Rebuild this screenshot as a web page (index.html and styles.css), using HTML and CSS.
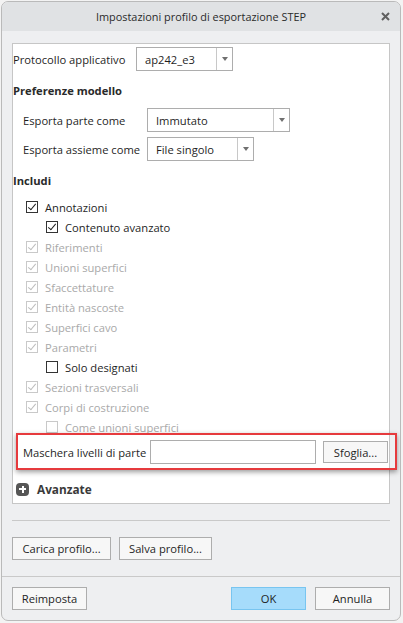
FILE: index.html
```html
<!DOCTYPE html>
<html lang="it">
<head>
    <meta charset="UTF-8">
    <meta name="viewport" content="width=device-width, initial-scale=1.0">
    <title>Impostazioni profilo di esportazione STEP</title>
    <link rel="stylesheet" href="styles.css">
</head>
<body>
    <div class="window">
        <div class="titlebar">
            <span class="title">Impostazioni profilo di esportazione STEP</span>
            <svg class="close" width="9" height="9" viewBox="0 0 9 9">
                <path d="M1 1 L8 8 M8 1 L1 8" stroke="#606060" stroke-width="2"/>
            </svg>
        </div>

        <div class="content">
            <div class="panel">
                <div class="row proto">
                    <span class="label">Protocollo applicativo</span>
                    <div class="select sel-proto">
                        <span class="value">ap242_e3</span>
                        <span class="drop"><i class="arrow"></i></span>
                    </div>
                </div>

                <div class="heading">Preferenze modello</div>
                <div class="row sub first">
                    <span class="label">Esporta parte come</span>
                    <div class="select sel-parte">
                        <span class="value">Immutato</span>
                        <span class="drop"><i class="arrow"></i></span>
                    </div>
                </div>
                <div class="row sub second">
                    <span class="label">Esporta assieme come</span>
                    <div class="select sel-assieme">
                        <span class="value">File singolo</span>
                        <span class="drop"><i class="arrow"></i></span>
                    </div>
                </div>

                <div class="heading includi">Includi</div>
                <div class="checks">
                    <div class="check"><span class="box on"></span>Annotazioni</div>
                    <div class="check indent"><span class="box on"></span>Contenuto avanzato</div>
                    <div class="check disabled"><span class="box on"></span>Riferimenti</div>
                    <div class="check disabled"><span class="box on"></span>Unioni superfici</div>
                    <div class="check disabled"><span class="box on"></span>Sfaccettature</div>
                    <div class="check disabled"><span class="box on"></span>Entità nascoste</div>
                    <div class="check disabled"><span class="box on"></span>Superfici cavo</div>
                    <div class="check disabled"><span class="box on"></span>Parametri</div>
                    <div class="check indent"><span class="box"></span>Solo designati</div>
                    <div class="check disabled"><span class="box on"></span>Sezioni trasversali</div>
                    <div class="check disabled"><span class="box on"></span>Corpi di costruzione</div>
                    <div class="check indent disabled"><span class="box"></span>Come unioni superfici</div>
                </div>

                <div class="row mask">
                    <span class="label">Maschera livelli di parte</span>
                    <input type="text" class="mask-input">
                    <button class="btn browse">Sfoglia...</button>
                    <div class="highlight"></div>
                </div>

                <div class="advanced">
                    <span class="plus"></span>
                    <span>Avanzate</span>
                </div>
            </div>

            <div class="divider"></div>

            <div class="profile-buttons">
                <button class="btn load">Carica profilo...</button>
                <button class="btn save">Salva profilo...</button>
            </div>
        </div>

        <div class="footer">
            <button class="btn wide">Reimposta</button>
            <div class="spacer"></div>
            <button class="btn wide ok">OK</button>
            <button class="btn wide">Annulla</button>
        </div>
    </div>
</body>
</html>
```

FILE: styles.css
```css
* {
    margin: 0;
    padding: 0;
    box-sizing: border-box;
}

body {
    background-color: #f3f3f3;
    font-family: 'Open Sans', 'Noto Sans', sans-serif;
    font-size: 11.2px;
    color: #1f1f1f;
}

.window {
    margin: 1px 0 0 1px;
    width: 400px;
    border: 1px solid #bababa;
    border-radius: 7px;
    background-color: #eeeff1;
    overflow: hidden;
}

.titlebar {
    height: 29px;
    background-color: #e0e2e4;
    display: grid;
    grid-template-columns: 1fr auto 1fr;
    align-items: center;
}

.title {
    grid-column: 2;
    font-size: 10.9px;
    color: #2a2a2a;
    white-space: nowrap;
}

.close {
    grid-column: 3;
    justify-self: end;
    margin-right: 10px;
}

.content {
    padding: 12px 10px 16px 10px;
}

.panel {
    background-color: #fff;
    border: 1px solid #c6c6c6;
    padding: 3px 0 4px 0;
}

.row {
    display: flex;
    align-items: center;
    white-space: nowrap;
}

.proto {
    height: 24px;
}

.proto .label {
    width: 123px;
}

.sub {
    height: 24px;
    padding-left: 10px;
}

.sub .label {
    width: 124px;
}

.first {
    margin-top: 7px;
}

.second {
    margin-top: 5px;
}

.heading {
    height: 20px;
    line-height: 20px;
    margin-top: 10px;
    font-weight: bold;
    color: #2a2a2a;
}

.select {
    display: flex;
    height: 24px;
    border: 1px solid #adadad;
    background-color: #fff;
}

.sel-proto {
    width: 97px;
}

.sel-parte {
    width: 143px;
}

.sel-assieme {
    width: 107px;
}

.select .value {
    flex: 1;
    padding-left: 8px;
    display: flex;
    align-items: center;
}

.select .drop {
    width: 16px;
    border-left: 1px solid #c8c8c8;
    display: flex;
    align-items: center;
    justify-content: center;
}

.arrow {
    width: 0;
    height: 0;
    border-left: 3.5px solid transparent;
    border-right: 3.5px solid transparent;
    border-top: 4px solid #707070;
}

.checks {
    margin-top: 6px;
}

.check {
    height: 20px;
    display: flex;
    align-items: center;
    padding-left: 13px;
    white-space: nowrap;
}

.check.indent {
    padding-left: 33px;
}

.box {
    width: 12px;
    height: 12px;
    border: 1px solid #333;
    margin-right: 7px;
    position: relative;
}

.box.on::after {
    content: '';
    position: absolute;
    left: 3px;
    top: 0px;
    width: 3px;
    height: 7px;
    border-right: 1.5px solid #1f1f1f;
    border-bottom: 1.5px solid #1f1f1f;
    transform: rotate(40deg);
}

.disabled {
    color: #a9a9a9;
}

.disabled .box {
    border-color: #c9c9c9;
}

.disabled .box.on::after {
    border-color: #bdbdbd;
}

.mask {
    margin-top: 3px;
    height: 24px;
    padding-left: 10px;
    position: relative;
}

.mask .label {
    width: 127px;
}

.mask-input {
    width: 166px;
    height: 24px;
    border: 1px solid #adadad;
    background-color: #fff;
    margin-right: 7px;
}

.btn {
    height: 23px;
    border: 1px solid #adadad;
    background-color: #f7f7f7;
    font-family: inherit;
    font-size: 11.2px;
    color: #1f1f1f;
    padding: 0;
    white-space: nowrap;
}

.browse {
    width: 65px;
    height: 22px;
}

.highlight {
    position: absolute;
    left: 3px;
    top: -7px;
    width: 381px;
    height: 37px;
    border: 2.5px solid #e63a3d;
    box-shadow: 0 2px 5px rgba(0, 0, 0, 0.4);
}

.advanced {
    margin-top: 15px;
    height: 20px;
    display: flex;
    align-items: center;
    padding-left: 3px;
    font-weight: bold;
    font-size: 11.8px;
    color: #3a3a3a;
}

.plus {
    width: 13px;
    height: 13px;
    border-radius: 4px;
    background-color: #565656;
    margin-right: 8px;
    position: relative;
}

.plus::before, .plus::after {
    content: '';
    position: absolute;
    background-color: #fff;
}

.plus::before {
    left: 3px;
    top: 5.5px;
    width: 7px;
    height: 2px;
}

.plus::after {
    left: 5.5px;
    top: 3px;
    width: 2px;
    height: 7px;
}

.divider {
    height: 1px;
    background-color: #c9c9c9;
    margin-top: 16px;
}

.profile-buttons {
    display: flex;
    gap: 8px;
    margin-top: 16px;
}

.load {
    width: 99px;
}

.save {
    width: 93px;
}

.footer {
    border-top: 1px solid #c9c9c9;
    display: flex;
    gap: 9px;
    padding: 10px 10px 10px 10px;
}

.spacer {
    flex: 1;
}

.wide {
    width: 75px;
}

.ok {
    background-color: #a6dcfb;
    border-color: #78c5f0;
}
```
